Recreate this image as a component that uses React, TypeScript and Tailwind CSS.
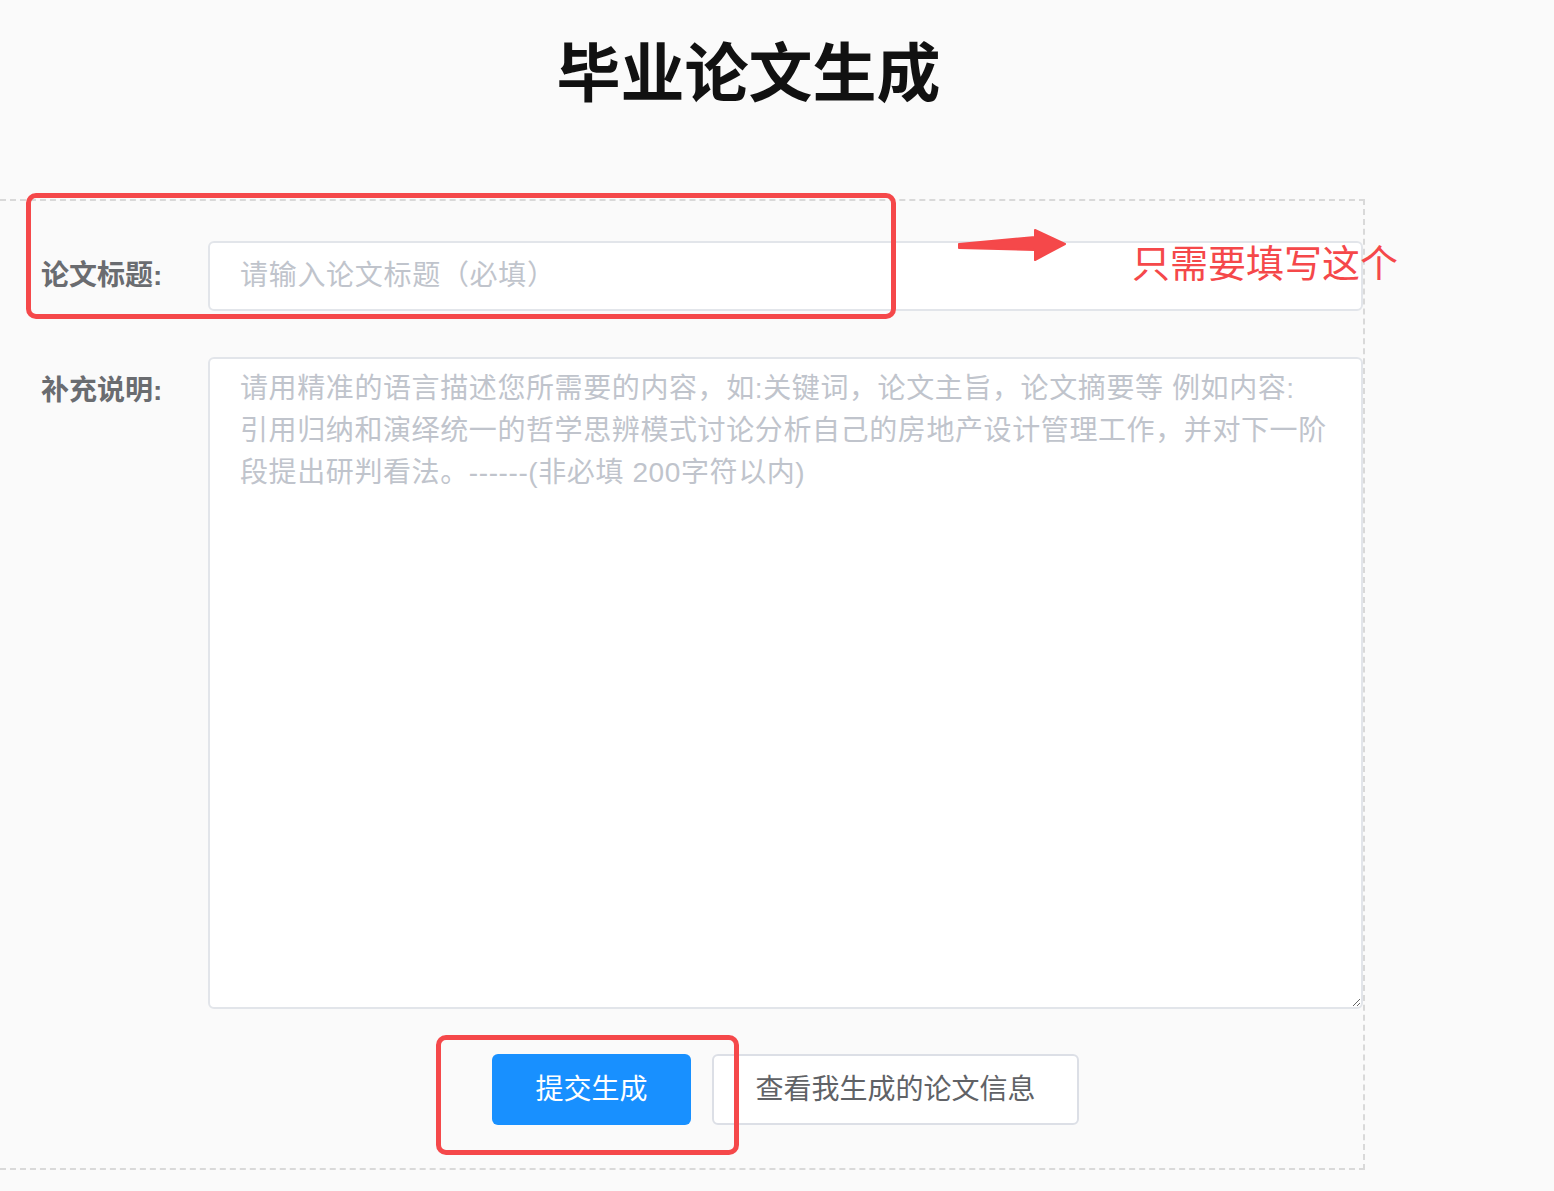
export default function App() {
  const font = "font-['Liberation_Sans','Noto_Sans_CJK_SC',sans-serif]";

  return (
    <div className={`relative h-[1191px] overflow-hidden bg-[#fafafa] ${font}`}>
      <h1 className="mt-[42px] pr-[57px] text-center text-[64px] font-bold leading-[64px] text-[#111]">
        毕业论文生成
      </h1>

      <div className="mt-[93px] w-[1365px] border-y-2 border-r-2 border-dashed border-[#d9d9d9] pt-[40px] pb-[43px]">
        <div className="flex items-center">
          <label className="w-[208px] shrink-0 pl-[41px] text-[28px] font-semibold text-[#6a6c70]">
            论文标题:
          </label>
          <input
            type="text"
            placeholder="请输入论文标题（必填）"
            className="h-[70px] flex-1 rounded-[6px] border-2 border-[#e2e5ea] bg-white px-[30px] text-[28px] tracking-[0.7px] text-[#606266] outline-none placeholder:text-[#c0c4cc]"
          />
        </div>

        <div className="mt-[46px] flex items-start">
          <label className="w-[208px] shrink-0 pl-[41px] pt-[13px] text-[28px] font-semibold leading-[42px] text-[#6a6c70]">
            补充说明:
          </label>
          <textarea
            placeholder={
              "请用精准的语言描述您所需要的内容，如:关键词，论文主旨，论文摘要等 例如内容:\n引用归纳和演绎统一的哲学思辨模式讨论分析自己的房地产设计管理工作，并对下一阶\n段提出研判看法。------(非必填 200字符以内)"
            }
            className="h-[652px] flex-1 rounded-[6px] border-2 border-[#e2e5ea] bg-white px-[30px] pt-[9px] text-[28px] leading-[42px] tracking-[0.6px] text-[#606266] outline-none placeholder:text-[#c0c4cc]"
          />
        </div>

        <div className="mt-[45px] flex">
          <div className="w-[208px] shrink-0" />
          <div className="flex flex-1 justify-center gap-[21px]">
            <button
              type="button"
              className="h-[71px] w-[199px] rounded-[6px] bg-[#1890ff] text-[28px] text-white"
            >
              提交生成
            </button>
            <button
              type="button"
              className="h-[71px] w-[367px] rounded-[6px] border-2 border-[#dcdfe6] bg-white text-[28px] text-[#606266]"
            >
              查看我生成的论文信息
            </button>
          </div>
        </div>
      </div>

      {/* annotations */}
      <div className="absolute left-[26px] top-[193px] h-[126px] w-[870px] rounded-[10px] border-[5px] border-[#f5484a]" />
      <div className="absolute left-[436px] top-[1035px] h-[120px] w-[303px] rounded-[10px] border-[5px] border-[#f5484a]" />
      <svg
        className="absolute left-[955px] top-[226px]"
        width="115"
        height="38"
        viewBox="0 0 115 38"
      >
        <polygon
          points="4,18 80,11 80,4 110,18 80,34 80,24 4,22"
          fill="#f5484a"
          stroke="#f5484a"
          strokeWidth="2"
          strokeLinejoin="round"
        />
      </svg>
      <div className="absolute left-[1132px] top-[240px] text-[38px] leading-[48px] text-[#f5484a]">
        只需要填写这个
      </div>
    </div>
  );
}
